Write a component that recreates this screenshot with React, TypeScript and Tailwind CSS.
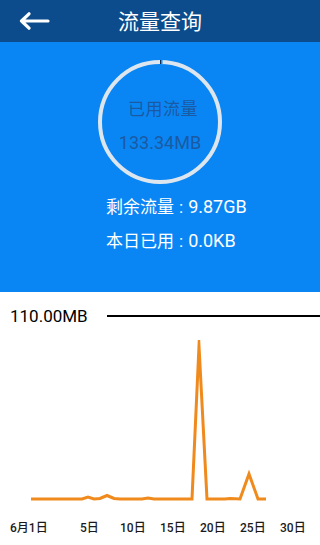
import React from "react";

const font = { fontFamily: "Roboto, 'Noto Sans CJK SC', sans-serif" };

const points: [number, number][] = [
  [31, 159], [82, 159], [88, 157], [94, 159], [100, 158.5], [107, 155.5], [114, 158.5],
  [120, 159], [142, 159], [148, 158], [154, 159], [192, 159], [199, 6], [207, 159],
  [225, 159], [230, 158.5], [240, 159], [249, 134], [258, 159], [266, 159],
];

export default function App() {
  const d = points.map((p, i) => `${i === 0 ? "M" : "L"}${p[0]} ${p[1]}`).join(" ");
  return (
    <div className="w-[320px] h-[545px] bg-white overflow-hidden flex flex-col" style={font}>
      <div className="h-[42px] bg-[#0c4c8c] flex items-center relative">
        <svg className="absolute left-[18px] top-[12px]" width="32" height="18" viewBox="0 0 32 18">
          <path d="M30 9 H3.5 M11 1.8 L3.5 9 L11 16.2" stroke="white" strokeWidth="3.2" fill="none" strokeLinecap="round" strokeLinejoin="round" />
        </svg>
        <div className="w-full text-center text-white text-[21px] leading-[28px] pt-[2px]">流量查询</div>
      </div>
      <div className="h-[250px] bg-[#0a86f4] flex flex-col">
        <div className="mt-[16px] mx-auto relative w-[128px] h-[128px]">
          <svg className="absolute inset-0" width="128" height="128" viewBox="0 0 128 128">
            <circle cx="64" cy="64" r="60" stroke="#dde6ef" strokeWidth="4" fill="none" />
            <rect x="64" y="2" width="1.5" height="4" fill="#0d2f55" />
            <rect x="65.5" y="2" width="1" height="4" fill="#0a86f4" />
          </svg>
          <div className="absolute inset-0 flex flex-col items-center pt-[41px] text-[#1a5aa3] text-[17px] leading-[20px]">
            <div className="ml-[6px] tracking-[0.5px]">已用流量</div>
            <div className="mt-[14px] text-[18px]">133.34MB</div>
          </div>
        </div>
        <div className="pl-[106px] mt-[9px] text-white text-[17px] leading-[24px] flex flex-col gap-[10px]">
          <div>剩余流量<span className="mx-[5px]">:</span><span className="text-[18px]">9.87GB</span></div>
          <div>本日已用<span className="mx-[5px]">:</span><span className="text-[18px]">0.0KB</span></div>
        </div>
      </div>
      <div className="h-[48px] flex items-center">
        <div className="pl-[10px] text-[17px] leading-[20px] text-black w-[107px]">110.00MB</div>
        <div className="flex-1 h-[2px] bg-black"></div>
      </div>
      <svg width="320" height="170" viewBox="0 0 320 170" className="block">
        <path d={d} stroke="#f08a1c" strokeWidth="3" fill="none" strokeLinejoin="miter" strokeMiterlimit="30" />
      </svg>
      <div className="flex pt-[9px] text-[12px] leading-[18px] text-[#1a1a1a] font-medium">
        <div className="pl-[10px] w-[80px]">6月1日</div>
        <div className="w-[40px]">5日</div>
        <div className="w-[40px]">10日</div>
        <div className="w-[40px]">15日</div>
        <div className="w-[40px]">20日</div>
        <div className="w-[40px]">25日</div>
        <div className="w-[40px]">30日</div>
      </div>
    </div>
  );
}
